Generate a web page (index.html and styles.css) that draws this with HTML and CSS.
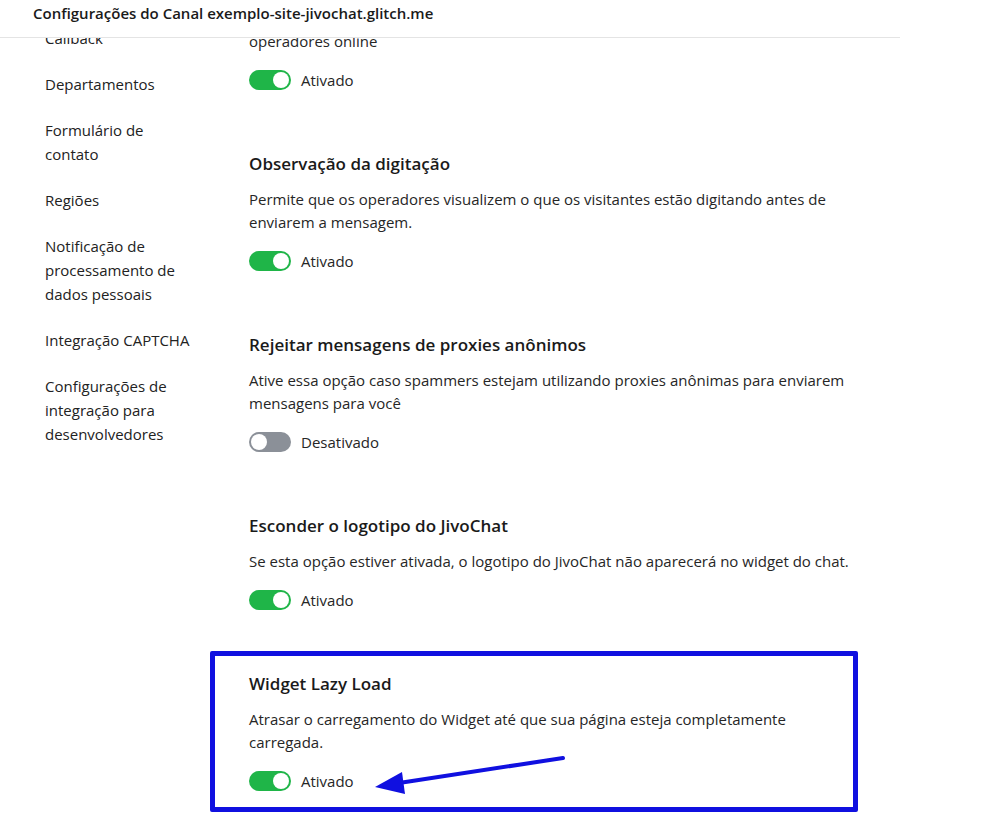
FILE: index.html
```html
<!DOCTYPE html>
<html lang="pt-BR">
<head>
  <meta charset="UTF-8">
  <title>Configurações do Canal</title>
  <link rel="stylesheet" href="styles.css">
</head>
<body>
  <div class="page">
    <div class="topbar">Configurações do Canal exemplo-site-jivochat.glitch.me</div>
    <div class="viewport">
      <div class="content">
        <ul class="sidebar">
          <li>Callback</li>
          <li>Departamentos</li>
          <li>Formulário de contato</li>
          <li>Regiões</li>
          <li>Notificação de processamento de dados pessoais</li>
          <li>Integração CAPTCHA</li>
          <li>Configurações de integração para desenvolvedores</li>
        </ul>
        <div class="main">
          <div class="setting">
            <p class="desc">operadores online</p>
            <div class="switch-row"><span class="switch on"></span>Ativado</div>
          </div>
          <div class="setting">
            <h3>Observação da digitação</h3>
            <p class="desc">Permite que os operadores visualizem o que os visitantes estão digitando antes de enviarem a mensagem.</p>
            <div class="switch-row"><span class="switch on"></span>Ativado</div>
          </div>
          <div class="setting">
            <h3>Rejeitar mensagens de proxies anônimos</h3>
            <p class="desc">Ative essa opção caso spammers estejam utilizando proxies anônimas para enviarem mensagens para você</p>
            <div class="switch-row"><span class="switch"></span>Desativado</div>
          </div>
          <div class="setting">
            <h3>Esconder o logotipo do JivoChat</h3>
            <p class="desc">Se esta opção estiver ativada, o logotipo do JivoChat não aparecerá no widget do chat.</p>
            <div class="switch-row"><span class="switch on"></span>Ativado</div>
          </div>
          <div class="setting highlight">
            <h3>Widget Lazy Load</h3>
            <p class="desc">Atrasar o carregamento do Widget até que sua página esteja completamente carregada.</p>
            <div class="switch-row"><span class="switch on"></span>Ativado</div>
            <svg class="arrow" width="643" height="151">
              <line x1="348" y1="102" x2="184" y2="127" stroke="#1010e0" stroke-width="4" stroke-linecap="round"/>
              <polygon points="160,131 187,116 190,138" fill="#1010e0"/>
            </svg>
          </div>
        </div>
      </div>
    </div>
  </div>
</body>
</html>
```

FILE: styles.css
```css
body {
  margin: 0;
  background: #fff;
  color: #1f1f1f;
  font-family: "Open Sans", "Noto Sans", sans-serif;
}

.page {
  width: 900px;
  height: 836px;
  overflow: hidden;
}

.topbar {
  position: relative;
  z-index: 1;
  height: 37px;
  padding-left: 33px;
  background: #fff;
  border-bottom: 1px solid #e4e4e4;
  font-size: 15px;
  font-weight: 600;
  line-height: 26px;
  color: #1a1a1a;
}

.viewport {
  height: 798px;
}

.content {
  display: flex;
  margin-top: -31px;
}

.sidebar {
  list-style: none;
  margin: 0;
  padding: 19px 0 0 45px;
  width: 150px;
  flex-shrink: 0;
  font-size: 15px;
  line-height: 24px;
  color: #222;
}

.sidebar li {
  margin-bottom: 22px;
}

.main {
  margin-left: 54px;
  padding-top: 23px;
  width: 607px;
}

.setting {
  margin-bottom: 60px;
}

.setting h3 {
  margin: 0;
  font-size: 17px;
  font-weight: 600;
  line-height: 24px;
  color: #1a1a1a;
}

.desc {
  margin: 12px 0 15px;
  font-size: 15px;
  line-height: 23px;
  color: #262626;
}

.setting:first-child .desc {
  margin-top: 0;
}

.switch-row {
  display: flex;
  align-items: center;
  gap: 10px;
  height: 24px;
  font-size: 15px;
  color: #262626;
}

.switch {
  position: relative;
  width: 42px;
  height: 20px;
  border-radius: 10px;
  background: #8b9098;
}

.switch::after {
  content: "";
  position: absolute;
  top: 2px;
  left: 2px;
  width: 16px;
  height: 16px;
  border-radius: 50%;
  background: #fff;
}

.switch.on {
  background: #1fb548;
}

.switch.on::after {
  left: 24px;
}

.highlight {
  position: relative;
  margin: -21px -2px 0 -39px;
  padding: 16px 0 14px 34px;
  border: 5px solid #1010e0;
  border-radius: 2px;
}

.arrow {
  position: absolute;
  left: 0;
  top: 0;
}
```
